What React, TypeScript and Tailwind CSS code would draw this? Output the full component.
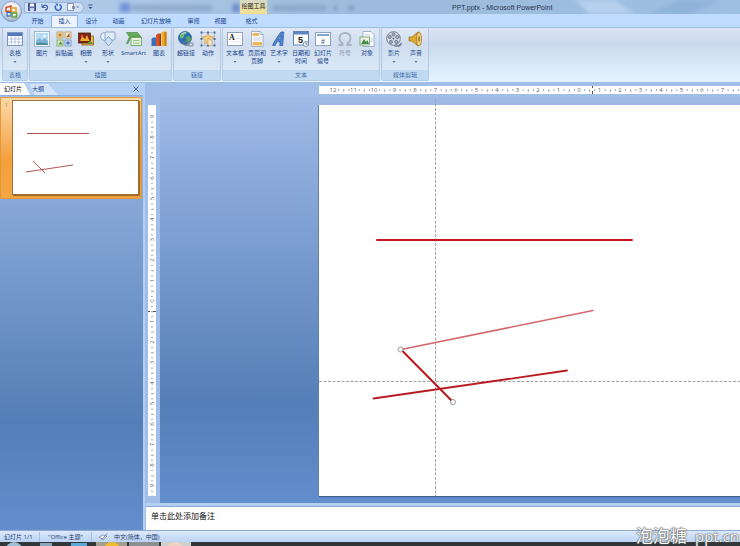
import type { ReactNode } from "react"

const FONT = "font-['Open_Sans','Noto_Sans_CJK_SC',sans-serif]"

type Tool = { label: string; icon: ReactNode; menu?: boolean; wide?: boolean; disabled?: boolean }
type Group = { title: string; tools: Tool[] }

function Icon({ children }: { children: ReactNode }) {
  return (
    <svg viewBox="0 0 16 16" className="h-4 w-4 shrink-0" aria-hidden="true">
      {children}
    </svg>
  )
}

const TableIcon = (
  <Icon>
    <rect x="0.5" y="1.5" width="15" height="13" fill="#fff" stroke="#7b98c4" />
    <rect x="1" y="2" width="14" height="3" fill="#5579bd" />
    <path d="M4.3 5v9M8 5v9M11.7 5v9M1 8h14M1 11h14" stroke="#a9bfdf" strokeWidth="0.8" />
  </Icon>
)

const PictureIcon = (
  <Icon>
    <rect x="0.5" y="0.5" width="15" height="15" fill="#f5f9fd" stroke="#9fb6cf" />
    <rect x="2" y="2" width="12" height="12" fill="#b4dbf3" />
    <path d="M2 10l3-3 3 2 3-2 3 3v4H2z" fill="#7db4d3" />
    <path d="M2 12.500l5-1 7 1V14H2z" fill="#4f8c9a" />
    <circle cx="10.500" cy="5" r="1.200" fill="#fff" />
  </Icon>
)

const ClipArtIcon = (
  <Icon>
    <rect x="1" y="1" width="6" height="6" fill="#f3e2b0" stroke="#b59650" strokeWidth="0.8" />
    <rect x="9" y="1" width="6" height="6" fill="#f5ead0" stroke="#b59650" strokeWidth="0.8" />
    <rect x="1" y="9" width="6" height="6" fill="#d9e9c9" stroke="#7da35a" strokeWidth="0.8" />
    <rect x="9" y="9" width="6" height="6" fill="#d6e4f7" stroke="#6b8dbb" strokeWidth="0.8" />
    <circle cx="4" cy="4" r="1.700" fill="#c9762a" />
    <path d="M10.500 6l3-4v4z" fill="#a5482e" />
    <path d="M2.500 13.500l2-3 2 3z" fill="#4f8c38" />
    <circle cx="12" cy="12" r="1.700" fill="#4673bb" />
  </Icon>
)

const AlbumIcon = (
  <Icon>
    <rect x="4" y="5" width="11.500" height="9" fill="#e9bd4c" stroke="#8e5a20" strokeWidth="0.8" />
    <rect x="0.500" y="2" width="12" height="10" fill="#7a2718" stroke="#5b1c10" strokeWidth="0.8" />
    <path d="M2 10l2-5 3 3 2-4 2.500 6z" fill="#f0a92e" />
    <circle cx="4" cy="5" r="1.300" fill="#e8472a" />
    <path d="M9 13l3-4 3 4z" fill="#59933b" />
  </Icon>
)

const ShapesIcon = (
  <Icon>
    <circle cx="4.500" cy="5.500" r="4" fill="#e9f1fb" stroke="#6f92c4" strokeWidth="0.8" />
    <rect x="5" y="1" width="10" height="8" rx="1" fill="#e3edf9" stroke="#6f92c4" strokeWidth="0.8" />
    <path d="M8.500 5.500l4 4.500-4 5-4-5z" fill="#cfe0f4" stroke="#6f92c4" strokeWidth="0.8" />
  </Icon>
)

const SmartArtIcon = (
  <Icon>
    <path d="M0.500 1.500h11l3.500 4.500H5l-3 6.500H0.500L3.500 6z" fill="#69ab5b" stroke="#3f7f3a" strokeWidth="0.6" />
    <rect x="5" y="6.500" width="10.500" height="8" fill="#e6f4df" stroke="#62a053" strokeWidth="0.8" />
    <path d="M7 9.500h6.500M7 12h6.500" stroke="#7db56d" strokeWidth="0.8" />
  </Icon>
)

const ChartIcon = (
  <Icon>
    <path d="M0.500 8l1.500-1.500h3V15H0.500z" fill="#3d6fc0" />
    <path d="M5 4l2-1.500h3V15H5z" fill="#d4542a" />
    <path d="M10.500 1.500l1.500-1h3.500V15h-5z" fill="#eeac2c" />
    <path d="M13.500 1v14h2V1z" fill="#c57f18" />
    <path d="M8.500 3v12H10V3z" fill="#a6381a" />
  </Icon>
)

const LinkIcon = (
  <Icon>
    <circle cx="7" cy="7" r="6.500" fill="#2f6fb5" stroke="#1d4a86" strokeWidth="0.6" />
    <path d="M2 4c2-3 5-3 7-3-1 2-3 2-3 4S3 8 2 7z" fill="#6fbf6a" />
    <path d="M8 6c3-2 5 0 5 2s-3 4-4 3 0-3-1-5z" fill="#57a858" />
    <path d="M3 3.500c2-2 4-2 5-1.500" stroke="#c3e3f8" fill="none" />
    <ellipse cx="8.500" cy="12.500" rx="2.800" ry="1.600" fill="none" stroke="#66758a" strokeWidth="1.200" />
    <ellipse cx="12.500" cy="13.500" rx="2.800" ry="1.600" fill="none" stroke="#8d9bad" strokeWidth="1.200" />
  </Icon>
)

const ActionIcon = (
  <Icon>
    <path
      d="M8 2l1.800 3.500 4 .5-3 2.800.8 4.200L8 11l-3.600 2 .8-4.200-3-2.800 4-.5z"
      fill="#f6cf7d"
      stroke="#cf9440"
      strokeWidth="0.7"
    />
    <rect x="1.500" y="1.500" width="13" height="13" fill="none" stroke="#6685ad" strokeWidth="0.7" strokeDasharray="1 1" />
    {[1.5, 8, 14.5].map((x) =>
      [1.5, 8, 14.5].map((y) =>
        x === 8 && y === 8 ? null : (
          <rect key={`${x}-${y}`} x={x - 1} y={y - 1} width="2" height="2" fill="#4c6c99" />
        )
      )
    )}
    <path d="M8 7v6c0 2 4 2 4 0v-3z" fill="#fbe9cb" stroke="#c08a4a" strokeWidth="0.6" />
  </Icon>
)

const TextBoxIcon = (
  <Icon>
    <rect x="0.500" y="1.500" width="15" height="13" fill="#fff" stroke="#8ba1bf" />
    <path d="M8.500 5H14M8.500 7.500H14M3 11h11" stroke="#d3dbe6" strokeWidth="0.7" />
    <text x="2" y="9" fontSize="8" fontWeight="bold" fontFamily="Liberation Serif, serif" fill="#222">
      A
    </text>
  </Icon>
)

const HeaderIcon = (
  <Icon>
    <path d="M2.500 0.500h8.500l3 3v12H2.500z" fill="#fff" stroke="#8ba1bf" strokeWidth="0.8" />
    <path d="M11 0.500v3h3" fill="#d7e2f0" stroke="#8ba1bf" strokeWidth="0.7" />
    <rect x="3.500" y="2" width="6.500" height="3" fill="#f1b55e" />
    <rect x="3.500" y="11" width="9.500" height="3.500" fill="#f1b55e" />
    <path d="M4 7h8.500M4 9h8.500" stroke="#a5b8d0" strokeWidth="0.7" />
  </Icon>
)

const WordArtIcon = (
  <Icon>
    <path
      d="M1.500 14.500c1-3 6-10.500 8.500-13.500h2.800l-1.100 13.500H8.700l.5-3.700H5.800L4.200 14.500zM7.300 8.500h2.200l.6-4z"
      fill="#4f86cf"
      stroke="#2c5ca4"
      strokeWidth="0.7"
    />
  </Icon>
)

const DateIcon = (
  <Icon>
    <rect x="0.500" y="0.500" width="15" height="13.500" fill="#fff" stroke="#6483b4" />
    <rect x="1" y="1" width="14" height="2.500" fill="#5d86c5" />
    <text x="5" y="12" fontSize="9" fontWeight="bold" fontFamily="Liberation Sans, sans-serif" fill="#222">
      5
    </text>
    <circle cx="13" cy="13" r="2.600" fill="#eef4fb" stroke="#6f87a8" strokeWidth="0.8" />
    <path d="M13 11.500v1.700h1.200" stroke="#333" strokeWidth="0.7" fill="none" />
  </Icon>
)

const SlideNumberIcon = (
  <Icon>
    <rect x="0.500" y="1.500" width="15" height="13" fill="#fff" stroke="#8ba1bf" />
    <rect x="2" y="3" width="12" height="2" fill="#7fa4d8" />
    <text x="6" y="12.500" fontSize="7" fontWeight="bold" fontFamily="Liberation Sans, sans-serif" fill="#4f6f9f">
      #
    </text>
  </Icon>
)

const SymbolIcon = (
  <Icon>
    <path
      d="M1.500 14h4v-1.500C3.300 11 2.500 9.300 2.500 7.300 2.500 4 4.800 2 8 2s5.500 2 5.500 5.300c0 2-.8 3.700-3 5.200V14h4"
      fill="none"
      stroke="#a7b2c1"
      strokeWidth="1.800"
    />
  </Icon>
)

const ObjectIcon = (
  <Icon>
    <path d="M4 0.500h8l3 3v12H4z" fill="#fff" stroke="#8ba1bf" strokeWidth="0.8" />
    <rect x="1" y="6" width="9.500" height="8" fill="#eef6ea" stroke="#6b9a62" strokeWidth="0.8" />
    <path d="M2 13l3-5 2 3 1.500-2L10 13z" fill="#3f8a45" />
    <path d="M11 8h3M11 10h3M6 4h5" stroke="#9fb3cc" strokeWidth="0.7" />
  </Icon>
)

const MovieIcon = (
  <Icon>
    <circle cx="7.500" cy="7.500" r="6.800" fill="#d9e0e8" stroke="#687788" strokeWidth="0.9" />
    {[[7.5, 3.5], [3.8, 6], [5, 10.8], [10.2, 10.8], [11.3, 6]].map(([cx, cy]) => (
      <circle key={`${cx}-${cy}`} cx={cx} cy={cy} r="1.600" fill="#a3b0bf" stroke="#556477" strokeWidth="0.7" />
    ))}
    <circle cx="7.500" cy="7.500" r="0.900" fill="#4a586a" />
    <path d="M8 14c4 1.500 6-1 7.500-3v3c-2 2-5 2.500-7.500 1z" fill="#6c7a8c" />
  </Icon>
)

const SoundIcon = (
  <Icon>
    <path d="M1 6h3l6-5v14l-6-5H1z" fill="#e0a92f" stroke="#946a1c" strokeWidth="0.7" />
    <ellipse cx="11" cy="8" rx="2.500" ry="7" fill="#f4d27a" stroke="#946a1c" strokeWidth="0.7" />
    <ellipse cx="11" cy="8" rx="1" ry="3" fill="#a57a2a" />
  </Icon>
)

const GROUPS: Group[] = [
  { title: "表格", tools: [{ label: "表格", icon: TableIcon, menu: true }] },
  {
    title: "插图",
    tools: [
      { label: "图片", icon: PictureIcon },
      { label: "剪贴画", icon: ClipArtIcon },
      { label: "相册", icon: AlbumIcon, menu: true },
      { label: "形状", icon: ShapesIcon, menu: true },
      { label: "SmartArt", icon: SmartArtIcon, wide: true },
      { label: "图表", icon: ChartIcon },
    ],
  },
  {
    title: "链接",
    tools: [
      { label: "超链接", icon: LinkIcon },
      { label: "动作", icon: ActionIcon },
    ],
  },
  {
    title: "文本",
    tools: [
      { label: "文本框", icon: TextBoxIcon, menu: true },
      { label: "页眉和\n页脚", icon: HeaderIcon },
      { label: "艺术字", icon: WordArtIcon, menu: true },
      { label: "日期和\n时间", icon: DateIcon },
      { label: "幻灯片\n编号", icon: SlideNumberIcon },
      { label: "符号", icon: SymbolIcon, disabled: true },
      { label: "对象", icon: ObjectIcon },
    ],
  },
  {
    title: "媒体剪辑",
    tools: [
      { label: "影片", icon: MovieIcon, menu: true },
      { label: "声音", icon: SoundIcon, menu: true },
    ],
  },
]

const TABS = ["开始", "插入", "设计", "动画", "幻灯片放映", "审阅", "视图"]

function TitleBar() {
  return (
    <header className="relative flex h-[14px] shrink-0 items-center overflow-hidden bg-linear-to-r from-[#b4cdec] via-[#9dbbdc] to-[#9dbfe2] pl-[24px]">
      {/* windows showing through the glass frame */}
      <svg className="absolute inset-0 h-full w-full blur-[2px]" aria-hidden="true">
        <rect x="120" y="3" width="10" height="9" fill="#6f8fd8" />
        <rect x="132" y="5" width="80" height="6" fill="#7d98b9" opacity="0.6" />
        <rect x="233" y="4" width="6" height="8" fill="#5e82c4" />
        <rect x="272" y="5" width="54" height="6" fill="#7d98b9" opacity="0.6" />
        <rect x="334" y="6" width="3" height="4" fill="#6f89aa" />
        <rect x="349" y="6" width="4" height="4" fill="#6f89aa" />
        <path d="M575 0h40l20 14h-45z" fill="#b6d0ee" />
        <path d="M680 0h40l-30 14h-40z" fill="#8fb2d8" />
      </svg>
      <div className="relative flex h-[11px] w-[60px] items-center justify-between rounded-r-full border border-[#9db6d8] bg-[#cfdff4] pl-[3px] pr-1">
        <button aria-label="保存">
          <svg viewBox="0 0 8 8" className="h-2 w-2">
            <path d="M0.500 0.500h7v7h-7z" fill="#5a6fb8" stroke="#3b4c8e" />
            <path d="M2 0.500h4v3H2z" fill="#fff" />
            <path d="M2 5h4v3H2z" fill="#c9d5ee" />
          </svg>
        </button>
        <button aria-label="撤消">
          <svg viewBox="0 0 8 8" className="h-2 w-2">
            <path d="M1 1v3.500h3.500" fill="none" stroke="#3d62b5" />
            <path d="M1.500 4c2-3 5-2 5 .5 0 1.500-1 2.500-2.500 2.500" fill="none" stroke="#3d62b5" strokeWidth="1.300" />
          </svg>
        </button>
        <button aria-label="恢复">
          <svg viewBox="0 0 8 8" className="h-2 w-2">
            <path d="M5.500 1.500A3 3 0 1 1 1.800 2.500" fill="none" stroke="#3566c4" strokeWidth="1.500" />
            <path d="M1 0.500h3v3z" fill="#3566c4" />
          </svg>
        </button>
        <button aria-label="打印预览">
          <svg viewBox="0 0 12 8" className="h-2 w-3">
            <rect x="0.500" y="0.500" width="6" height="7" fill="#f4f7fb" stroke="#8499b8" />
            <rect x="5" y="3" width="3" height="3" fill="#7d8fac" />
            <path d="M9.500 3.500h2.500l-1.200 1.500z" fill="#53688c" />
          </svg>
        </button>
      </div>
      <button className="relative ml-1" aria-label="自定义快速访问工具栏">
        <svg viewBox="0 0 5 6" className="h-[6px] w-[5px]">
          <path d="M0.500 1h4" stroke="#3e5679" />
          <path d="M0.500 3h4L2.500 5z" fill="#3e5679" />
        </svg>
      </button>
      <div className="relative ml-[147px] h-[14px] w-[27px] whitespace-nowrap bg-linear-to-b from-[#d5d8c4] to-[#f3e08f] text-center text-[6px] leading-[13px] text-[#222]">
        绘图工具
      </div>
      <h1 className="relative flex-1 pl-[185px] font-['Liberation_Sans',sans-serif] text-[7px] leading-[13px] text-[#26364f]">
        PPT.pptx - Microsoft PowerPoint
      </h1>
    </header>
  )
}

function OfficeButton() {
  return (
    <button className="absolute left-[1px] top-[1px] z-10 h-[21px] w-[21px]" aria-label="Office 按钮">
      <svg viewBox="0 0 21 21" className="h-full w-full">
        <defs>
          <radialGradient id="orb" cx="0.500" cy="0.300" r="0.700">
            <stop offset="0" stopColor="#ffffff" />
            <stop offset="0.600" stopColor="#dfe5ee" />
            <stop offset="1" stopColor="#8fa3c0" />
          </radialGradient>
        </defs>
        <circle cx="10.500" cy="10.500" r="10" fill="url(#orb)" stroke="#7d8fab" strokeWidth="0.8" />
        <path d="M5 6.500l5-1.500v5l-5 .5z" fill="none" stroke="#d9482a" strokeWidth="1.500" />
        <rect x="10.500" y="7" width="4.500" height="4" fill="none" stroke="#e8a01e" strokeWidth="1.500" />
        <rect x="6" y="11.500" width="4" height="3.500" fill="none" stroke="#3f70c4" strokeWidth="1.300" />
        <rect x="11" y="12" width="4.500" height="4" fill="none" stroke="#64a838" strokeWidth="1.500" />
      </svg>
    </button>
  )
}

function TabRow() {
  return (
    <nav className="flex h-[13px] shrink-0 items-end bg-[#bfdbff] pl-[24px] text-[6px] leading-[12px] text-[#15428b]">
      {TABS.map((t) => (
        <button
          key={t}
          className={`h-3 whitespace-nowrap ${t.length > 2 ? "w-[48px]" : "w-[27px]"} ${
            t === "插入" ? "rounded-t-[2px] border border-b-0 border-[#8db2e3] bg-[#edf4fd] leading-[11px]" : ""
          }`}
        >
          {t}
        </button>
      ))}
      <button className="ml-1 h-3 w-[27px]">格式</button>
    </nav>
  )
}

function ToolButton({ tool }: { tool: Tool }) {
  return (
    <button
      disabled={tool.disabled}
      className={`flex flex-col items-center ${tool.wide ? "w-[29px]" : "w-[22px]"} ${
        tool.disabled ? "text-[#8e9bb0]" : "text-[#15428b]"
      }`}
    >
      {tool.icon}
      <span className="mt-[2px] whitespace-pre text-center text-[6px] leading-[8px]">{tool.label}</span>
      {tool.menu && (
        <svg viewBox="0 0 4 2" className="mt-1 h-[2px] w-1">
          <path d="M0.500 0h3L2 2z" fill="#5674a4" />
        </svg>
      )}
    </button>
  )
}

function Ribbon() {
  return (
    <div className="flex h-[56px] shrink-0 gap-px border-y border-[#9dbde4] bg-linear-to-b from-[#dbe4f5] via-[#cbd9ec] via-30% to-[#e4f5ff] px-[2px] pb-px">
      {GROUPS.map((g) => (
        <section
          key={g.title}
          className="flex flex-col rounded-[2px] border border-t-0 border-[#b3cae6] bg-linear-to-b from-[#e0e9f6] via-[#d0ddee] via-30% to-[#dcebfa]"
        >
          <div className="flex flex-1 justify-center px-px pt-[3px]">
            {g.tools.map((t) => (
              <ToolButton key={t.label} tool={t} />
            ))}
          </div>
          <h2 className="bg-[#c1d9f1] text-center text-[6px] leading-[10px] text-[#3e6aaa]">{g.title}</h2>
        </section>
      ))}
    </div>
  )
}

function SlidePane() {
  return (
    <aside className="flex w-[143px] shrink-0 flex-col">
      <div className="flex h-[13px] shrink-0 items-end border-b border-[#8fb0de] bg-[#b5d1f6] text-[6px] leading-[11px]">
        <button className="h-3 w-[30px] whitespace-nowrap bg-white pl-1 text-left text-black [clip-path:polygon(0_0,80%_0,100%_100%,0_100%)]">
          幻灯片
        </button>
        <button className="h-[11px] w-[28px] bg-[#d3e4fb] pl-[2px] text-left text-[#15428b] [clip-path:polygon(0_0,65%_0,100%_100%,15%_100%)]">
          大纲
        </button>
        <button className="ml-auto mr-1 flex h-3 items-center" aria-label="关闭">
          <svg viewBox="0 0 6 6" className="h-[6px] w-[6px]">
            <path d="M0.500 0.500l5 5M5.500 0.500l-5 5" stroke="#35588f" strokeWidth="0.9" />
          </svg>
        </button>
      </div>
      <button
        className="mt-px flex h-[102px] w-[142px] rounded-[2px] border border-[#e09a3c] bg-linear-to-b from-[#fbd9a8] via-[#f4a03a] via-60% to-[#f5a742] pb-[3px] pr-[2px] pt-[2px]"
        aria-label="幻灯片 1"
      >
        <span className="w-[11px] pt-px text-[6px] leading-[8px] text-[#c47a30]">1</span>
        <span className="h-full flex-1 border border-[#9c7238] bg-white shadow-[1px_1px_1px_#a5692a]">
          <svg className="block h-full w-full" aria-hidden="true">
            <g stroke="#b5534f" fill="none">
              <path d="M14 32.500h62" />
              <path d="M13 71l47-7" />
              <path d="M20 60l12 12" />
            </g>
          </svg>
        </span>
      </button>
    </aside>
  )
}

const RULER_STEP = 20.5
const TICKS = [0.25, 0.5, 0.75]

function HorizontalRuler() {
  const marks = Array.from({ length: 20 }, (_, i) => i - 12)
  return (
    <svg className="block h-2 w-full bg-white" aria-hidden="true">
      {marks.map((m) => {
        const x = 260 + m * RULER_STEP
        return (
          <g key={m}>
            <text x={x} y="6" fontSize="6" textAnchor="middle" fill="#666">
              {Math.abs(m)}
            </text>
            {TICKS.map((t) => (
              <rect key={t} x={x + t * RULER_STEP} y="3" width="1" height={t === 0.5 ? 3 : 2} fill="#a5a5a5" />
            ))}
          </g>
        )
      })}
      <path d="M273.500 0v2M273.500 5v3" stroke="#555" />
    </svg>
  )
}

function VerticalRuler() {
  const marks = Array.from({ length: 19 }, (_, i) => i - 9)
  return (
    <svg className="block h-full w-2 bg-white" aria-hidden="true">
      {marks.map((m) => {
        const y = 196 + m * RULER_STEP
        return (
          <g key={m}>
            <text transform={`translate(6 ${y}) rotate(-90)`} fontSize="6" textAnchor="middle" fill="#666">
              {Math.abs(m)}
            </text>
            {TICKS.map((t) => (
              <rect key={t} x="3" y={y + t * RULER_STEP} width={t === 0.5 ? 3 : 2} height="1" fill="#a5a5a5" />
            ))}
          </g>
        )
      })}
      <path d="M0 206.500h2M5 206.500h3" stroke="#555" />
    </svg>
  )
}

function Slide() {
  return (
    <div className="h-full bg-white shadow-[0_1px_1px_#3f5f8e,-1px_0_0_#6787b5]">
      <svg className="block h-full w-full overflow-visible" aria-label="幻灯片内容">
        <g stroke="#a3a3a3" strokeDasharray="3 1.500" fill="none">
          <line x1="116.500" y1="-6" x2="116.500" y2="100%" />
          <line x1="0" y1="276.500" x2="100%" y2="276.500" />
        </g>
        <g fill="none" strokeLinecap="round">
          <path d="M58 135h255" stroke="#c4161c" strokeWidth="1.800" />
          <path d="M54.500 293.500l193.500-28" stroke="#b81c22" strokeWidth="1.800" />
          <path d="M82 244.500l192-39" stroke="#d4686b" strokeWidth="1.600" />
          <path d="M82 244.500l51 51.500" stroke="#bd171d" strokeWidth="2" />
        </g>
        <g fill="#fff" stroke="#808080" strokeWidth="0.8">
          <circle cx="81.500" cy="244.500" r="2.500" />
          <circle cx="134" cy="297" r="2.500" />
        </g>
      </svg>
    </div>
  )
}

function Editor() {
  return (
    <main className="flex min-w-0 flex-1 flex-col border-l-2 border-[#b4cff4] bg-[#a1bee8]">
      <div className="h-[14px] shrink-0 pl-[174px] pt-[3px]">
        <HorizontalRuler />
      </div>
      <div className="flex min-h-0 flex-1">
        <div className="w-[15px] shrink-0 pb-[7px] pl-[3px] pt-2">
          <VerticalRuler />
        </div>
        <div className="min-w-0 flex-1 bg-linear-to-b from-[#9fbae7] via-[#547eb7] via-76% to-[#638ecc] pb-[7px] pl-[159px] pt-2">
          <Slide />
        </div>
      </div>
      <div className="flex shrink-0 border-t-[3px] border-[#b4cff4] pl-px">
        <textarea
          aria-label="备注"
          placeholder="单击此处添加备注"
          className="block h-6 w-full resize-none border-t border-[#8aa9d4] bg-white px-[5px] pt-[3px] text-[8px] leading-[12px] outline-none placeholder:text-[#111]"
        />
      </div>
    </main>
  )
}

function StatusBar() {
  return (
    <footer className="flex h-3 shrink-0 items-center whitespace-nowrap border-t border-[#8eaad0] bg-linear-to-b from-[#dbe9fc] to-[#bdd4f4] pl-1 text-[6px] leading-[10px] text-[#1d3b6e]">
      <span className="w-[36px] border-r border-[#a5c0e4]">幻灯片 1/1</span>
      <span className="w-[52px] border-r border-[#a5c0e4] pl-2">"Office 主题"</span>
      <button className="px-[6px]" aria-label="拼写检查">
        <svg viewBox="0 0 10 8" className="h-2 w-[10px]">
          <path d="M1 4l4-2 4 1-4 4z" fill="#f3f6fb" stroke="#7d8ea8" strokeWidth="0.8" />
          <path d="M3 4.500l1.500 1.500L9 0.500" fill="none" stroke="#6b83ad" />
        </svg>
      </button>
      <span>中文(简体，中国)</span>
    </footer>
  )
}

function Taskbar() {
  return (
    <svg className="block h-1 w-full shrink-0 bg-[#34373a]" aria-hidden="true">
      <circle cx="14" cy="9" r="9" fill="#9fc0d6" />
      <rect x="40" y="1" width="12" height="3" fill="#8aa6bd" />
      <rect x="71" y="1" width="16" height="3" fill="#58a8dc" />
      <rect x="96" y="0" width="31" height="4" fill="#a3a08e" />
      <circle cx="112" cy="8" r="8" fill="#f0bd2c" />
      <rect x="129" y="0" width="30" height="4" fill="#8e8f93" />
      <rect x="161" y="0" width="30" height="4" fill="#cfcfcf" />
      <circle cx="175" cy="8" r="8" fill="#eed3c4" />
    </svg>
  )
}

export default function App() {
  return (
    <div className={`relative flex h-screen flex-col overflow-hidden ${FONT}`}>
      <OfficeButton />
      <TitleBar />
      <TabRow />
      <Ribbon />
      <div className="flex min-h-0 flex-1 bg-linear-to-b from-[#a3bfe8] via-[#547eb7] via-76% to-[#638ecc]">
        <SlidePane />
        <Editor />
      </div>
      <StatusBar />
      <Taskbar />
      <div className="pointer-events-none absolute bottom-0 right-0 flex items-center gap-2 whitespace-nowrap pr-px text-[17px] leading-[20px] text-white [text-shadow:0_0_1px_#444,0_0_1px_#666,0_0_2px_#777]">
        <span>泡泡糖</span>
        <span className="text-[15px]">ppt.cn</span>
      </div>
    </div>
  )
}
